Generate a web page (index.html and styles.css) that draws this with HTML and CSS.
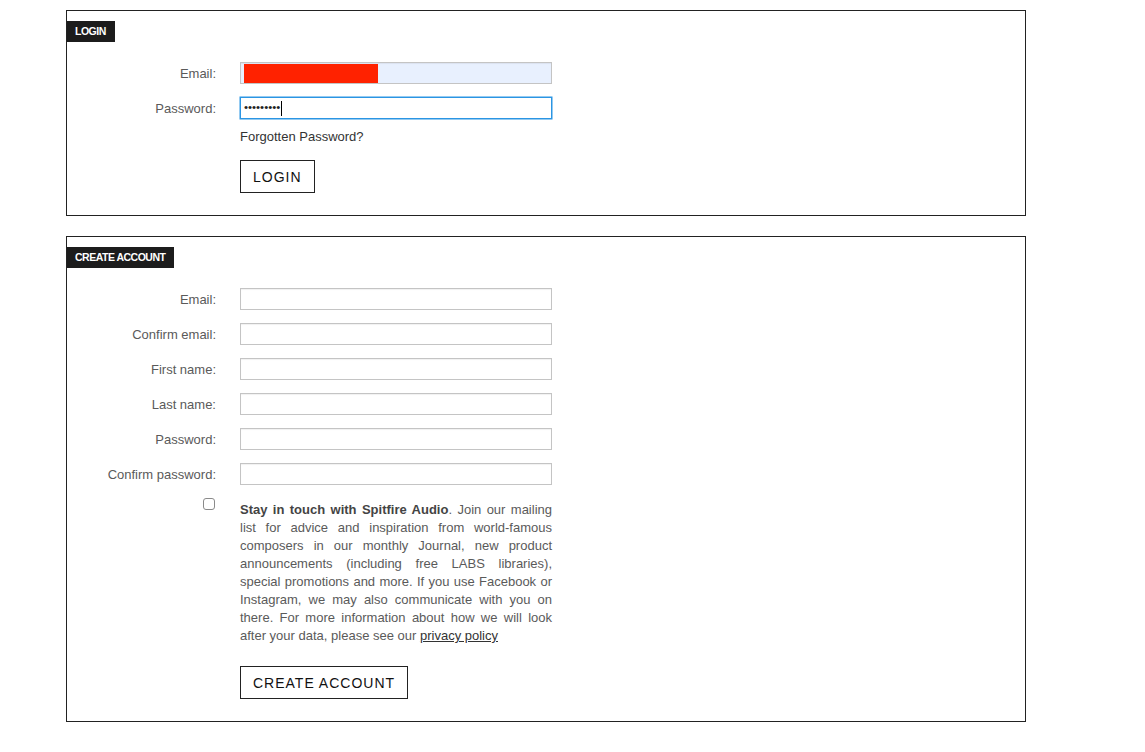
FILE: index.html
```html
<!DOCTYPE html>
<html lang="en">
<head>
    <meta charset="UTF-8">
    <meta name="viewport" content="width=device-width, initial-scale=1.0">
    <title>Login / Create Account</title>
    <link rel="stylesheet" href="styles.css">
</head>
<body>

    <div class="page">

        <div class="panel">
            <div class="panel-tag">LOGIN</div>
            <form class="panel-form">
                <div class="form-row">
                    <label>Email:</label>
                    <div class="field field-autofill"><span class="redact"></span></div>
                </div>
                <div class="form-row">
                    <label>Password:</label>
                    <div class="field field-focused"><span class="dots">•••••••••</span><span class="caret"></span></div>
                </div>
                <div class="form-row form-row-plain">
                    <span></span>
                    <a class="forgot" href="#">Forgotten Password?</a>
                </div>
                <div class="form-row form-row-button">
                    <span></span>
                    <div><button type="button" class="btn">LOGIN</button></div>
                </div>
            </form>
        </div>

        <div class="panel">
            <div class="panel-tag">CREATE ACCOUNT</div>
            <form class="panel-form">
                <div class="form-row">
                    <label>Email:</label>
                    <input class="field" type="email">
                </div>
                <div class="form-row">
                    <label>Confirm email:</label>
                    <input class="field" type="email">
                </div>
                <div class="form-row">
                    <label>First name:</label>
                    <input class="field" type="text">
                </div>
                <div class="form-row">
                    <label>Last name:</label>
                    <input class="field" type="text">
                </div>
                <div class="form-row">
                    <label>Password:</label>
                    <input class="field" type="password">
                </div>
                <div class="form-row">
                    <label>Confirm password:</label>
                    <input class="field" type="password">
                </div>
                <div class="form-row form-row-consent">
                    <input class="check" type="checkbox">
                    <p class="consent"><strong>Stay in touch with Spitfire Audio</strong>. Join our mailing list for advice and inspiration from world-famous composers in our monthly Journal, new product announcements (including free LABS libraries), special promotions and more. If you use Facebook or Instagram, we may also communicate with you on there. For more information about how we will look after your data, please see our <a href="#">privacy policy</a></p>
                </div>
                <div class="form-row form-row-submit">
                    <span></span>
                    <div><button type="button" class="btn">CREATE ACCOUNT</button></div>
                </div>
            </form>
        </div>

    </div>

</body>
</html>
```

FILE: styles.css
```css
body {
    margin: 0;
    padding: 0;
    background-color: #fff;
    font-family: "Liberation Sans", Arial, sans-serif;
    font-size: 13px;
    color: #555;
}
.page {
    padding: 10px 0 0 66px;
    width: 960px;
}
.panel {
    border: 1px solid #222;
    margin-bottom: 20px;
    padding: 10px 0 22px;
}
.panel-tag {
    display: inline-block;
    background-color: #1c1c1c;
    color: #fff;
    font-size: 10.5px;
    font-weight: bold;
    letter-spacing: -0.5px;
    line-height: 21px;
    padding: 0 9px 0 8px;
}
.panel-form {
    margin-top: 20px;
}
.form-row {
    display: grid;
    grid-template-columns: 149px 312px;
    column-gap: 24px;
    align-items: center;
    margin-bottom: 13px;
}
.form-row label {
    text-align: right;
    color: #5a5a5a;
}
.field {
    box-sizing: border-box;
    display: block;
    width: 312px;
    height: 22px;
    margin: 0;
    padding: 0 4px;
    border: 1px solid #c4c4c4;
    box-shadow: inset 0 1px 1px rgba(0,0,0,0.06);
    background-color: #fff;
    font-family: inherit;
    font-size: 13px;
}
.field-autofill {
    background-color: #e8f0fe;
    padding: 1px 3px;
}
.redact {
    display: block;
    width: 134px;
    height: 19px;
    background-color: #ff2200;
}
.field-focused {
    display: flex;
    align-items: center;
    border-color: #2b95e3;
    box-shadow: 0 0 0 0.5px #2b95e3;
    padding: 0 3px;
}
.dots {
    font-size: 11.5px;
    color: #222;
    line-height: 1;
}
.caret {
    display: inline-block;
    width: 1px;
    height: 15px;
    margin-left: 1px;
    background-color: #000;
}
.form-row-plain {
    margin-top: -3px;
    margin-bottom: 15px;
    line-height: 16px;
}
.forgot {
    color: #333;
    text-decoration: none;
}
.form-row-button {
    margin-bottom: 0;
}
.btn {
    height: 33px;
    padding: 0 12px;
    border: 1px solid #222;
    background-color: #fff;
    color: #111;
    font-family: inherit;
    font-size: 14px;
    letter-spacing: 1px;
    cursor: pointer;
}
.form-row-consent {
    align-items: start;
    margin-top: 16px;
    margin-bottom: 21px;
}
.check {
    -webkit-appearance: none;
    appearance: none;
    justify-self: end;
    width: 12px;
    height: 12px;
    margin: -3px 1px 0 0;
    border: 1px solid #8a8a8a;
    border-radius: 3px;
    background-color: #fff;
}
.consent {
    margin: 0;
    line-height: 18px;
    text-align: justify;
    color: #5a5a5a;
}
.consent strong {
    color: #444;
}
.consent a {
    color: #333;
}
.form-row-submit {
    margin-bottom: 0;
}
```
